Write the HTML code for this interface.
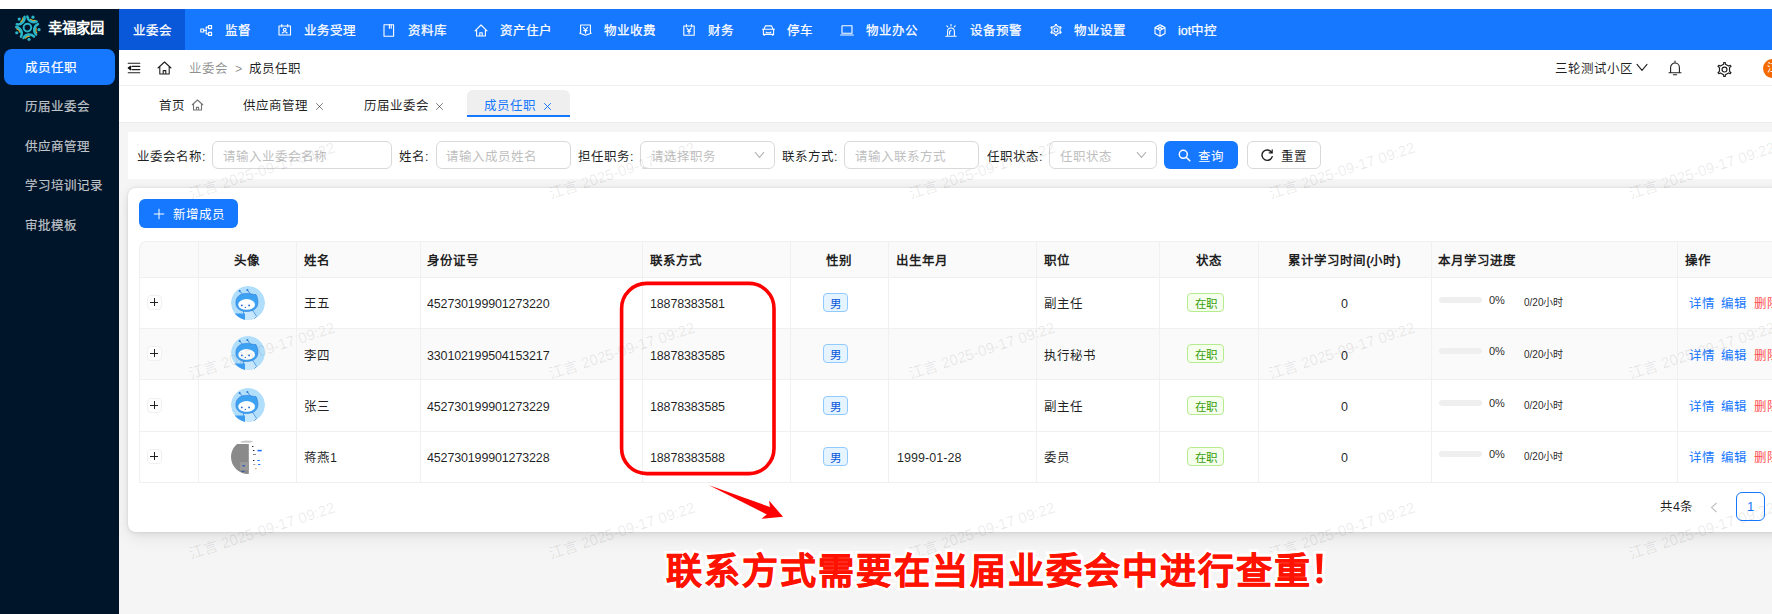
<!DOCTYPE html>
<html lang="zh-CN">
<head>
<meta charset="utf-8">
<style>
*{box-sizing:border-box;margin:0;padding:0}
html,body{width:1772px;height:614px;overflow:hidden;background:#fff}
body{position:relative;font-family:"Liberation Sans",sans-serif;font-size:13px;color:rgba(0,0,0,0.88)}
.a{position:absolute;white-space:nowrap}
#side{left:0;top:9px;width:119px;height:605px;background:#001529}
#top{left:119px;top:9px;width:1653px;height:41px;background:#1677ff}
#hdr{left:119px;top:50px;width:1653px;height:36px;background:#fff;border-bottom:1px solid #f0f0f0}
#tabs{left:119px;top:86px;width:1653px;height:37px;background:#fff;border-bottom:1px solid #ececec}
#content{left:119px;top:123px;width:1653px;height:491px;background:#f5f5f5}
.navt{color:#fff;font-size:12.5px;line-height:18px;-webkit-text-stroke:0.25px #fff}
.side-it{left:25px;color:rgba(255,255,255,0.7);font-size:12.5px;line-height:18px;-webkit-text-stroke:0.2px currentColor}
#filter{left:128px;top:132px;width:1644px;height:47px;background:#fff}
.lbl{font-size:12.5px;line-height:18px;color:rgba(0,0,0,0.88)}
.inp{height:28px;border:1px solid #d9d9d9;border-radius:6px;background:#fff}
.ph{color:#bfbfbf;font-size:12.5px;line-height:18px}
#card{left:128px;top:188px;width:1660px;height:344px;background:#fff;border-radius:8px;box-shadow:0 6px 16px rgba(0,0,0,0.08),0 1px 6px rgba(0,0,0,0.07),0 0 3px rgba(0,0,0,0.07)}
.th{font-weight:bold;font-size:12.5px;line-height:18px;color:rgba(0,0,0,0.88)}
.td{font-size:12.5px;line-height:18px;color:rgba(0,0,0,0.88)}
.num{letter-spacing:-0.15px}
.vl{width:1px;background:#f0f0f0}
.hl{height:1px;background:#f0f0f0}
.wm{color:rgba(0,0,0,0.09);font-size:15px;line-height:18px;transform:rotate(-18deg);transform-origin:0 100%}
.exp{width:15px;height:15px;border:1px solid #f0f0f0;border-radius:4px;background:#fff}
.exp:before{content:"";position:absolute;left:2px;top:6px;width:8px;height:1px;background:#222}
.exp:after{content:"";position:absolute;left:6px;top:2px;width:1px;height:8px;background:#222}
.av{width:34px;height:34px;border-radius:50%;background:#b5dcf9;overflow:hidden}
.av4{width:34px;height:34px;border-radius:50%;background:#fff;overflow:hidden}
.tagb{width:25px;height:19px;border:1px solid #91caff;background:#e6f4ff;color:#0958d9;border-radius:4px;font-size:11.5px;line-height:17px;padding-top:1.5px;text-align:center}
.tagg{width:37px;height:19px;border:1px solid #b7eb8f;background:#f6ffed;color:#389e0d;border-radius:4px;font-size:11.5px;line-height:17px;padding-top:1.5px;text-align:center}
.bar{width:43px;height:6px;border-radius:3px;background:#efefef}
.pct{font-size:11px;line-height:14px;color:rgba(0,0,0,0.88)}
.hrs{font-size:10px;line-height:14px;color:rgba(0,0,0,0.88)}
.note{font-size:36px;line-height:46px;font-weight:900;letter-spacing:2px}
</style>
</head>
<body>
<svg width="0" height="0" style="position:absolute">
<defs>
<clipPath id="avc"><circle cx="17" cy="17" r="17"/></clipPath>
<symbol id="avatar" viewBox="0 0 34 34">
<g clip-path="url(#avc)">
<circle cx="17" cy="17" r="17" fill="#b0defb"/>
<path d="M12.5 25 L21.5 24 L25.5 30.5 L21 35 L12.5 35 Z" fill="#c6e7fc" stroke="#3a86e0" stroke-width="0.7"/>
<path d="M2.5 27.5 H14 V35 H2.5 Z" fill="#3b9bf0"/>
<path d="M4.9 16.8 C4.9 10.5 9.5 7.4 15.5 7.4 C19.5 7.4 22.5 8.8 25 8.6 C26.4 11.2 27 14 26.8 17 C26.6 22.5 22 25.4 15.8 25.4 C9 25.4 4.9 22.4 4.9 16.8 Z" fill="#3ea2f3" stroke="#2a78d8" stroke-width="0.6"/>
<ellipse cx="15.6" cy="18.4" rx="8.4" ry="5.3" fill="#fff"/>
<circle cx="10.8" cy="19.4" r="0.95" fill="#2a6ed2"/>
<circle cx="18.1" cy="19.4" r="0.95" fill="#2a6ed2"/>
<circle cx="14.3" cy="21.4" r="0.7" fill="#2a6ed2"/>
<path d="M8.6 5 L11 7.8 M16.4 4 L19.2 7.8" stroke="#2a78d8" stroke-width="0.8" fill="none"/>
<circle cx="8.6" cy="5" r="1" fill="#2a78d8"/>
<circle cx="16.4" cy="4" r="1" fill="#2a78d8"/>
</g>
</symbol>
<symbol id="avatar4" viewBox="0 0 34 34">
<g clip-path="url(#avc)">
<rect x="0" y="0" width="34" height="34" fill="#fff"/>
<ellipse cx="15" cy="1.6" rx="7" ry="1.2" fill="#c8c8c8"/>
<rect x="0" y="4" width="17.8" height="31" fill="#8a8a8a"/>
<rect x="9" y="22" width="9" height="8" fill="#9a9a9a"/>
<rect x="11.5" y="25.2" width="2.4" height="1.2" fill="#1d4fc4"/>
<rect x="10.5" y="30.8" width="3" height="1" fill="#2a4fb0"/>
<rect x="21" y="6" width="1.5" height="1" fill="#333"/>
<rect x="22" y="10" width="1.4" height="1" fill="#222"/>
<rect x="26.5" y="9.8" width="4.2" height="1.6" fill="#1e70ff"/>
<rect x="22" y="14" width="3" height="1" fill="#888"/>
<rect x="22" y="20" width="1.4" height="1" fill="#222"/>
<rect x="26.3" y="20" width="2.6" height="1" fill="#2a7bff"/>
<rect x="22" y="24" width="2.4" height="1" fill="#aaa"/>
<rect x="27" y="24" width="2.4" height="1" fill="#2a7bff"/>
<rect x="24" y="28.2" width="1.6" height="1" fill="#c9a070"/>
</g>
</symbol>
</defs></svg>
<div class="a" id="side"></div>
<div class="a" id="top"></div>
<div class="a" id="hdr"></div>
<div class="a" id="tabs"></div>
<div class="a" id="content"></div>

<!-- logo -->
<svg class="a" style="left:12px;top:12px" width="32" height="32" viewBox="0 0 32 32"><circle cx="15.4" cy="15.6" r="3.8" fill="none" stroke="#2ab5c8" stroke-width="2"/><path d="M11.02 5.98 A5.0 5.0 0 0 1 8.82 10.03" fill="none" stroke="#e8a91c" stroke-width="1.5" stroke-linecap="round"/><path d="M12.44 4.87 A6.5 6.5 0 0 1 4.78 12.27" fill="none" stroke="#2ab5c8" stroke-width="2.5" stroke-linecap="round"/><circle cx="7.20" cy="7.11" r="1.6" fill="#2ab5c8"/><path d="M23.20 8.46 A5.0 5.0 0 0 1 18.66 7.62" fill="none" stroke="#e8a91c" stroke-width="1.5" stroke-linecap="round"/><path d="M24.69 9.47 A6.5 6.5 0 0 1 15.29 4.47" fill="none" stroke="#2ab5c8" stroke-width="2.5" stroke-linecap="round"/><circle cx="20.94" cy="5.18" r="1.6" fill="#2ab5c8"/><path d="M24.60 20.81 A5.0 5.0 0 0 1 24.00 16.23" fill="none" stroke="#e8a91c" stroke-width="1.5" stroke-linecap="round"/><path d="M24.10 22.54 A6.5 6.5 0 0 1 25.95 12.05" fill="none" stroke="#2ab5c8" stroke-width="2.5" stroke-linecap="round"/><circle cx="27.02" cy="17.65" r="1.6" fill="#2ab5c8"/><path d="M13.29 25.96 A5.0 5.0 0 0 1 17.45 23.97" fill="none" stroke="#e8a91c" stroke-width="1.5" stroke-linecap="round"/><path d="M11.49 26.02 A6.5 6.5 0 0 1 22.03 24.54" fill="none" stroke="#2ab5c8" stroke-width="2.5" stroke-linecap="round"/><circle cx="17.04" cy="27.29" r="1.6" fill="#2ab5c8"/><path d="M4.89 16.79 A5.0 5.0 0 0 1 8.07 20.14" fill="none" stroke="#e8a91c" stroke-width="1.5" stroke-linecap="round"/><path d="M4.28 15.10 A6.5 6.5 0 0 1 8.95 24.67" fill="none" stroke="#2ab5c8" stroke-width="2.5" stroke-linecap="round"/><circle cx="4.79" cy="20.77" r="1.6" fill="#2ab5c8"/></svg>
<div class="a" style="left:48px;top:19px;color:#fff;font-weight:bold;font-size:14.3px;line-height:18px">幸福家园</div>

<!-- side menu -->
<div class="a" style="left:4px;top:49px;width:111px;height:36px;background:#1677ff;border-radius:8px"></div>
<div class="a side-it" style="top:59px;color:#fff">成员任职</div>
<div class="a side-it" style="top:98px">历届业委会</div>
<div class="a side-it" style="top:138px">供应商管理</div>
<div class="a side-it" style="top:177px">学习培训记录</div>
<div class="a side-it" style="top:217px">审批模板</div>

<!-- top nav -->
<div class="a" style="left:119px;top:9px;width:66px;height:41px;background:#0958d9"></div>
<div class="a navt" style="left:133px;top:22px">业委会</div>
<div class="a navt" style="left:225px;top:22px">监督</div>
<div class="a navt" style="left:304px;top:22px">业务受理</div>
<div class="a navt" style="left:408px;top:22px">资料库</div>
<div class="a navt" style="left:500px;top:22px">资产住户</div>
<div class="a navt" style="left:604px;top:22px">物业收费</div>
<div class="a navt" style="left:708px;top:22px">财务</div>
<div class="a navt" style="left:787px;top:22px">停车</div>
<div class="a navt" style="left:866px;top:22px">物业办公</div>
<div class="a navt" style="left:970px;top:22px">设备预警</div>
<div class="a navt" style="left:1074px;top:22px">物业设置</div>
<div class="a navt" style="left:1178px;top:22px">iot中控</div>

<!-- header breadcrumb -->
<div class="a td" style="left:189px;top:60px;color:rgba(0,0,0,0.45)">业委会</div>
<div class="a td" style="left:235px;top:60px;color:rgba(0,0,0,0.45)">&gt;</div>
<div class="a td" style="left:249px;top:60px">成员任职</div>
<div class="a td" style="left:1555px;top:60px">三轮测试小区</div>

<!-- tabs -->
<div class="a td" style="left:159px;top:97px">首页</div>
<div class="a td" style="left:243px;top:97px">供应商管理</div>
<div class="a td" style="left:364px;top:97px">历届业委会</div>
<div class="a" style="left:467px;top:90px;width:103px;height:27px;background:#efefef;border-radius:6px 6px 0 0;border-bottom:2px solid #1677ff"></div>
<div class="a td" style="left:484px;top:97px;color:#1677ff">成员任职</div>

<!-- filter -->
<div class="a" id="filter"></div>
<div class="a lbl" style="left:137px;top:148px">业委会名称:</div>
<div class="a inp" style="left:212px;top:141px;width:180px"></div>
<div class="a ph" style="left:223px;top:148px">请输入业委会名称</div>
<div class="a lbl" style="left:399px;top:148px">姓名:</div>
<div class="a inp" style="left:436px;top:141px;width:135px"></div>
<div class="a ph" style="left:446px;top:148px">请输入成员姓名</div>
<div class="a lbl" style="left:578px;top:148px">担任职务:</div>
<div class="a inp" style="left:640px;top:141px;width:135px"></div>
<div class="a ph" style="left:651px;top:148px">请选择职务</div>
<div class="a lbl" style="left:782px;top:148px">联系方式:</div>
<div class="a inp" style="left:844px;top:141px;width:135px"></div>
<div class="a ph" style="left:855px;top:148px">请输入联系方式</div>
<div class="a lbl" style="left:987px;top:148px">任职状态:</div>
<div class="a inp" style="left:1049px;top:141px;width:108px"></div>
<div class="a ph" style="left:1060px;top:148px">任职状态</div>
<div class="a" style="left:1164px;top:141px;width:74px;height:28px;background:#1677ff;border-radius:6px"></div>
<div class="a td" style="left:1198px;top:148px;color:#fff">查询</div>
<div class="a inp" style="left:1247px;top:141px;width:74px"></div>
<div class="a td" style="left:1281px;top:148px">重置</div>

<!-- card -->
<div class="a" id="card"></div>
<div class="a" style="left:139px;top:199px;width:99px;height:29px;background:#1677ff;border-radius:6px"></div>
<div class="a td" style="left:173px;top:206px;color:#fff">新增成员</div>

<!-- TABLE START -->
<div class="a" style="left:139px;top:241px;width:1640px;height:36px;background:#fafafa;border-radius:8px 0 0 0"></div>
<div class="a" style="left:139px;top:328px;width:1640px;height:51px;background:#fafafa"></div>
<div class="a" style="left:139px;top:241px;width:1640px;height:242px;border-left:1px solid #f0f0f0;border-top:1px solid #f0f0f0;border-radius:8px 0 0 0"></div>
<div class="a hl" style="left:139px;top:277px;width:1640px"></div>
<div class="a hl" style="left:139px;top:328px;width:1640px"></div>
<div class="a hl" style="left:139px;top:379px;width:1640px"></div>
<div class="a hl" style="left:139px;top:431px;width:1640px"></div>
<div class="a hl" style="left:139px;top:482px;width:1640px"></div>
<div class="a vl" style="left:198px;top:241px;height:242px"></div>
<div class="a vl" style="left:296px;top:241px;height:242px"></div>
<div class="a vl" style="left:420px;top:241px;height:242px"></div>
<div class="a vl" style="left:642px;top:241px;height:242px"></div>
<div class="a vl" style="left:790px;top:241px;height:242px"></div>
<div class="a vl" style="left:888px;top:241px;height:242px"></div>
<div class="a vl" style="left:1036px;top:241px;height:242px"></div>
<div class="a vl" style="left:1159px;top:241px;height:242px"></div>
<div class="a vl" style="left:1258px;top:241px;height:242px"></div>
<div class="a vl" style="left:1431px;top:241px;height:242px"></div>
<div class="a vl" style="left:1677px;top:241px;height:242px"></div>
<div class="a th" style="left:198px;top:252px;width:98px;text-align:center">头像</div>
<div class="a th" style="left:304px;top:252px">姓名</div>
<div class="a th" style="left:427px;top:252px">身份证号</div>
<div class="a th" style="left:650px;top:252px">联系方式</div>
<div class="a th" style="left:790px;top:252px;width:98px;text-align:center">性别</div>
<div class="a th" style="left:896px;top:252px">出生年月</div>
<div class="a th" style="left:1044px;top:252px">职位</div>
<div class="a th" style="left:1159px;top:252px;width:99px;text-align:center">状态</div>
<div class="a th" style="left:1258px;top:252px;width:173px;text-align:center">累计学习时间(小时)</div>
<div class="a th" style="left:1438px;top:252px">本月学习进度</div>
<div class="a th" style="left:1685px;top:252px">操作</div>
<div class="a exp" style="left:147px;top:295px"></div>
<svg class="a" style="left:231px;top:286px" width="34" height="34"><use href="#avatar"/></svg>
<div class="a td" style="left:304px;top:295px">王五</div>
<div class="a td num" style="left:427px;top:295px">452730199901273220</div>
<div class="a td num" style="left:650px;top:295px">18878383581</div>
<div class="a tagb" style="left:823px;top:293px">男</div>
<div class="a td" style="left:1044px;top:295px">副主任</div>
<div class="a tagg" style="left:1187px;top:293px">在职</div>
<div class="a td" style="left:1258px;top:295px;width:173px;text-align:center">0</div>
<div class="a bar" style="left:1439px;top:297px"></div>
<div class="a pct" style="left:1489px;top:293px">0%</div>
<div class="a hrs" style="left:1524px;top:296px">0/20小时</div>
<div class="a td" style="left:1689px;top:295px;color:#1677ff">详情</div>
<div class="a td" style="left:1721px;top:295px;color:#1677ff">编辑</div>
<div class="a td" style="left:1754px;top:295px;color:#ff4d4f">删除</div>
<div class="a exp" style="left:147px;top:346px"></div>
<svg class="a" style="left:231px;top:336px" width="34" height="34"><use href="#avatar"/></svg>
<div class="a td" style="left:304px;top:347px">李四</div>
<div class="a td num" style="left:427px;top:347px">330102199504153217</div>
<div class="a td num" style="left:650px;top:347px">18878383585</div>
<div class="a tagb" style="left:823px;top:344px">男</div>
<div class="a td" style="left:1044px;top:347px">执行秘书</div>
<div class="a tagg" style="left:1187px;top:344px">在职</div>
<div class="a td" style="left:1258px;top:347px;width:173px;text-align:center">0</div>
<div class="a bar" style="left:1439px;top:348px"></div>
<div class="a pct" style="left:1489px;top:344px">0%</div>
<div class="a hrs" style="left:1524px;top:348px">0/20小时</div>
<div class="a td" style="left:1689px;top:347px;color:#1677ff">详情</div>
<div class="a td" style="left:1721px;top:347px;color:#1677ff">编辑</div>
<div class="a td" style="left:1754px;top:347px;color:#ff4d4f">删除</div>
<div class="a exp" style="left:147px;top:398px"></div>
<svg class="a" style="left:231px;top:388px" width="34" height="34"><use href="#avatar"/></svg>
<div class="a td" style="left:304px;top:398px">张三</div>
<div class="a td num" style="left:427px;top:398px">452730199901273229</div>
<div class="a td num" style="left:650px;top:398px">18878383585</div>
<div class="a tagb" style="left:823px;top:396px">男</div>
<div class="a td" style="left:1044px;top:398px">副主任</div>
<div class="a tagg" style="left:1187px;top:396px">在职</div>
<div class="a td" style="left:1258px;top:398px;width:173px;text-align:center">0</div>
<div class="a bar" style="left:1439px;top:400px"></div>
<div class="a pct" style="left:1489px;top:396px">0%</div>
<div class="a hrs" style="left:1524px;top:399px">0/20小时</div>
<div class="a td" style="left:1689px;top:398px;color:#1677ff">详情</div>
<div class="a td" style="left:1721px;top:398px;color:#1677ff">编辑</div>
<div class="a td" style="left:1754px;top:398px;color:#ff4d4f">删除</div>
<div class="a exp" style="left:147px;top:449px"></div>
<svg class="a" style="left:231px;top:440px" width="34" height="34"><use href="#avatar4"/></svg>
<div class="a td" style="left:304px;top:449px">蒋燕1</div>
<div class="a td num" style="left:427px;top:449px">452730199901273228</div>
<div class="a td num" style="left:650px;top:449px">18878383588</div>
<div class="a tagb" style="left:823px;top:447px">男</div>
<div class="a td" style="left:897px;top:449px;letter-spacing:0.05px">1999-01-28</div>
<div class="a td" style="left:1044px;top:449px">委员</div>
<div class="a tagg" style="left:1187px;top:447px">在职</div>
<div class="a td" style="left:1258px;top:449px;width:173px;text-align:center">0</div>
<div class="a bar" style="left:1439px;top:451px"></div>
<div class="a pct" style="left:1489px;top:447px">0%</div>
<div class="a hrs" style="left:1524px;top:450px">0/20小时</div>
<div class="a td" style="left:1689px;top:449px;color:#1677ff">详情</div>
<div class="a td" style="left:1721px;top:449px;color:#1677ff">编辑</div>
<div class="a td" style="left:1754px;top:449px;color:#ff4d4f">删除</div>
<!-- TABLE END -->
<!-- nav icons -->
<svg class="a" style="left:200px;top:25px" width="13" height="11" viewBox="0 0 13 11"><g fill="none" stroke="#fff" stroke-width="1.1" stroke-linejoin="round" stroke-linecap="round"><rect x="0.8" y="4" width="3" height="3"/><rect x="8.6" y="0.6" width="3" height="3"/><rect x="8.6" y="7.4" width="3" height="3"/><path d="M3.8 5.5 H6.2 M6.2 2.1 V8.9 M6.2 2.1 H8.6 M6.2 8.9 H8.6"/></g></svg>
<svg class="a" style="left:278px;top:24px" width="14" height="12" viewBox="0 0 14 12"><g fill="none" stroke="#fff" stroke-width="1.1" stroke-linejoin="round" stroke-linecap="round"><rect x="1" y="2" width="11.5" height="9"/><path d="M3.8 0.6 V3 M9.7 0.6 V3"/><circle cx="6.75" cy="5.6" r="1.4"/><path d="M4.4 9 Q6.75 6.6 9.1 9"/></g></svg>
<svg class="a" style="left:383px;top:24px" width="12" height="13" viewBox="0 0 12 13"><g fill="none" stroke="#fff" stroke-width="1.1" stroke-linejoin="round" stroke-linecap="round"><rect x="1" y="0.8" width="9.6" height="11.4"/><path d="M6.4 0.8 V4.2 M8.2 0.8 V4.2"/></g></svg>
<svg class="a" style="left:474px;top:24px" width="14" height="13" viewBox="0 0 14 13"><g fill="none" stroke="#fff" stroke-width="1.1" stroke-linejoin="round" stroke-linecap="round"><path d="M1 6.8 L7 1 L13 6.8 M2.6 5.3 V12 H11.4 V5.3 M5.8 12 V8.8 H8.2 V12"/></g></svg>
<svg class="a" style="left:579px;top:24px" width="13" height="12" viewBox="0 0 13 12"><g fill="none" stroke="#fff" stroke-width="1.1" stroke-linejoin="round" stroke-linecap="round"><path d="M1.6 1 H11.4 V8.6 L12.2 9.2 L6.5 11.2 L0.8 9.2 L1.6 8.6 Z"/><path d="M4.5 3.6 L6.5 6 L8.5 3.6 M6.5 6 V9 M4.8 6.6 H8.2"/></g></svg>
<svg class="a" style="left:683px;top:24px" width="12" height="12" viewBox="0 0 12 12"><g fill="none" stroke="#fff" stroke-width="1.1" stroke-linejoin="round" stroke-linecap="round"><rect x="0.8" y="2" width="10.4" height="9.2"/><path d="M3.4 0.6 V2.8 M8.6 0.6 V2.8 M4 4.4 L6 6.6 L8 4.4 M6 6.6 V9.6 M4.4 7.3 H7.6"/></g></svg>
<svg class="a" style="left:762px;top:25px" width="13" height="11" viewBox="0 0 13 11"><g fill="none" stroke="#fff" stroke-width="1.1" stroke-linejoin="round" stroke-linecap="round"><path d="M3.4 0.9 H9.6 L11 4.2 H2 Z M1.4 4.2 H11.6 V9.4 H1.4 Z M0.4 4.2 H1.4 M11.6 4.2 H12.6 M2.2 9.4 V10.6 M10.8 9.4 V10.6 M4.2 7.2 L5 7.8 H8 L8.8 7.2"/></g></svg>
<svg class="a" style="left:840px;top:25px" width="14" height="11" viewBox="0 0 14 11"><g fill="none" stroke="#fff" stroke-width="1.1" stroke-linejoin="round" stroke-linecap="round"><rect x="2" y="0.8" width="10" height="7.4"/><path d="M0.6 10 H13.4"/></g></svg>
<svg class="a" style="left:945px;top:24px" width="12" height="13" viewBox="0 0 12 13"><g fill="none" stroke="#fff" stroke-width="1.1" stroke-linejoin="round" stroke-linecap="round"><path d="M2.6 11.2 V7.4 A3.4 3.4 0 0 1 9.4 7.4 V11.2 M0.8 12.3 H11.2 M6 0.5 V2 M1.8 1.8 L2.8 2.8 M10.2 1.8 L9.2 2.8 M4.6 10.2 V8 A1.4 1.4 0 0 1 6 6.6"/></g></svg>
<svg class="a" style="left:1050px;top:24px" width="12" height="12" viewBox="0 0 12 12"><g fill="none" stroke="#fff" stroke-width="1.1" stroke-linejoin="round" stroke-linecap="round"><path d="M5.28 1.76 L5.41 0.43 L6.59 0.43 L6.72 1.76 L9.31 3.26 L10.53 2.71 L11.12 3.72 L10.03 4.50 L10.03 7.50 L11.12 8.28 L10.53 9.29 L9.31 8.74 L6.72 10.24 L6.59 11.57 L5.41 11.57 L5.28 10.24 L2.69 8.74 L1.47 9.29 L0.88 8.28 L1.97 7.50 L1.97 4.50 L0.88 3.72 L1.47 2.71 L2.69 3.26 Z"/><circle cx="6" cy="6" r="2"/></g></svg>
<svg class="a" style="left:1154px;top:24px" width="12" height="13" viewBox="0 0 12 13"><g fill="none" stroke="#fff" stroke-width="1.1" stroke-linejoin="round" stroke-linecap="round"><path d="M6 0.8 L11 3.6 V9.4 L6 12.2 L1 9.4 V3.6 Z M1 3.6 L6 6.4 L11 3.6 M6 6.4 V12.2 M3.5 2.2 L8.5 5 M8.5 2.2 L3.5 5"/></g></svg>

<!-- header icons -->
<svg class="a" style="left:127px;top:62px" width="14" height="12" viewBox="0 0 14 12"><g fill="none" stroke="rgba(0,0,0,0.88)" stroke-width="1.1" stroke-linejoin="round" stroke-linecap="round"><path d="M1.2 1.2 H12.8 M5 4.4 H12.8 M5 7.6 H12.8 M1.2 10.8 H12.8"/><path d="M3.6 4.2 L1.2 6 L3.6 7.8 Z" fill="rgba(0,0,0,0.88)"/></g></svg>
<svg class="a" style="left:157px;top:61px" width="15" height="14" viewBox="0 0 15 14"><g fill="none" stroke="rgba(0,0,0,0.88)" stroke-width="1.1" stroke-linejoin="round" stroke-linecap="round" stroke-width="1.3"><path d="M1 7 L7.5 1 L14 7 M2.8 5.4 V13 H12.2 V5.4 M6.2 13 V9.6 H8.8 V13"/></g></svg>
<svg class="a" style="left:1636px;top:63px" width="12" height="9" viewBox="0 0 12 9"><path d="M1 1.4 L6 7.4 L11 1.4" fill="none" stroke="rgba(0,0,0,0.88)" stroke-width="1.1" stroke-linejoin="round" stroke-linecap="round" stroke-width="1.3"/></svg>
<svg class="a" style="left:1668px;top:60px" width="14" height="16" viewBox="0 0 14 16"><g fill="none" stroke="rgba(0,0,0,0.88)" stroke-width="1.1" stroke-linejoin="round" stroke-linecap="round" stroke-width="1.3"><path d="M7 1 V2.4 M2.6 12.4 V7.4 A4.4 4.4 0 0 1 11.4 7.4 V12.4 M1 12.8 H13 M5.4 14.8 H8.6"/></g></svg>
<svg class="a" style="left:1717px;top:62px" width="15" height="15" viewBox="0 0 14 14"><g fill="none" stroke="rgba(0,0,0,0.88)" stroke-width="1.1" stroke-linejoin="round" stroke-linecap="round" stroke-width="1.25"><path d="M6.17 2.07 L6.31 0.44 L7.69 0.44 L7.83 2.07 L10.85 3.81 L12.34 3.12 L13.03 4.32 L11.69 5.26 L11.69 8.74 L13.03 9.68 L12.34 10.88 L10.85 10.19 L7.83 11.93 L7.69 13.56 L6.31 13.56 L6.17 11.93 L3.15 10.19 L1.66 10.88 L0.97 9.68 L2.31 8.74 L2.31 5.26 L0.97 4.32 L1.66 3.12 L3.15 3.81 Z"/><circle cx="7" cy="7" r="2.3"/></g></svg>
<div class="a" style="left:1763px;top:59px;width:19px;height:19px;border-radius:50%;background:#f56a00;color:#fff;font-size:11px;line-height:19px;text-align:center;overflow:hidden">江</div>

<!-- tab icons -->
<svg class="a" style="left:191px;top:99px" width="13" height="12" viewBox="0 0 13 12"><g fill="none" stroke="rgba(0,0,0,0.55)" stroke-width="1.1" stroke-linejoin="round"><path d="M1 6 L6.5 1 L12 6 M2.5 4.8 V11 H10.5 V4.8 M5.4 11 V8.4 H7.6 V11"/></g></svg>
<svg class="a" style="left:315px;top:102px" width="9" height="9" viewBox="0 0 9 9"><path d="M1.2 1.2 L7.8 7.8 M7.8 1.2 L1.2 7.8" stroke="rgba(0,0,0,0.5)" stroke-width="1"/></svg>
<svg class="a" style="left:435px;top:102px" width="9" height="9" viewBox="0 0 9 9"><path d="M1.2 1.2 L7.8 7.8 M7.8 1.2 L1.2 7.8" stroke="rgba(0,0,0,0.5)" stroke-width="1"/></svg>
<svg class="a" style="left:543px;top:102px" width="9" height="9" viewBox="0 0 9 9"><path d="M1.2 1.2 L7.8 7.8 M7.8 1.2 L1.2 7.8" stroke="#1677ff" stroke-width="1"/></svg>

<!-- filter icons -->
<svg class="a" style="left:754px;top:151px" width="11" height="8" viewBox="0 0 11 8"><path d="M1 1.2 L5.5 6.4 L10 1.2" fill="none" stroke="rgba(0,0,0,0.3)" stroke-width="1.1"/></svg>
<svg class="a" style="left:1136px;top:151px" width="11" height="8" viewBox="0 0 11 8"><path d="M1 1.2 L5.5 6.4 L10 1.2" fill="none" stroke="rgba(0,0,0,0.3)" stroke-width="1.1"/></svg>
<svg class="a" style="left:1178px;top:149px" width="13" height="13" viewBox="0 0 13 13"><g fill="none" stroke="#fff" stroke-width="1.5" stroke-linecap="round"><circle cx="5.3" cy="5.3" r="4"/><path d="M8.2 8.2 L11.8 11.8"/></g></svg>
<svg class="a" style="left:1260px;top:149px" width="14" height="13" viewBox="0 0 14 13"><g fill="none" stroke="rgba(0,0,0,0.88)" stroke-width="1.4" stroke-linecap="round"><path d="M11.6 3.4 A5.2 5.2 0 1 0 12.2 7.6"/><path d="M12.2 0.8 V3.8 H9.2" stroke-width="1.2"/></g></svg>
<svg class="a" style="left:153px;top:208px" width="12" height="12" viewBox="0 0 12 12"><path d="M6 0.8 V11.2 M0.8 6 H11.2" stroke="#fff" stroke-width="1"/></svg>

<svg class="a" style="left:0;top:0" width="1772" height="614">
<g stroke="#fff" stroke-width="6" stroke-linejoin="round" fill="#fff"><path d="M1316.2 553.8 H1322.6 L1321.6 574 H1317.2 Z"/><circle cx="1319.4" cy="580.3" r="3.1"/></g>
<g fill="#ff1200"><path d="M1316.2 553.8 H1322.6 L1321.6 574 H1317.2 Z"/><circle cx="1319.4" cy="580.3" r="3.1"/></g>
</svg>
<!-- pagination -->
<div class="a td" style="left:1660px;top:498px">共4条</div>
<svg class="a" style="left:1709px;top:502px" width="10" height="11" viewBox="0 0 10 11"><path d="M7.5 1 L2.5 5.5 L7.5 10" fill="none" stroke="rgba(0,0,0,0.25)" stroke-width="1.1"/></svg>
<div class="a" style="left:1736px;top:492px;width:29px;height:29px;border:1px solid #1677ff;border-radius:6px;color:#1677ff;font-size:13px;line-height:27px;text-align:center">1</div>

<div class="a" style="left:119px;top:122px;width:1653px;height:492px;overflow:hidden;pointer-events:none">
<div class="a wm" style="left:73px;top:63px">江言 2025-09-17 09:22</div>
<div class="a wm" style="left:433px;top:63px">江言 2025-09-17 09:22</div>
<div class="a wm" style="left:793px;top:63px">江言 2025-09-17 09:22</div>
<div class="a wm" style="left:1153px;top:63px">江言 2025-09-17 09:22</div>
<div class="a wm" style="left:1513px;top:63px">江言 2025-09-17 09:22</div>
<div class="a wm" style="left:73px;top:243px">江言 2025-09-17 09:22</div>
<div class="a wm" style="left:433px;top:243px">江言 2025-09-17 09:22</div>
<div class="a wm" style="left:793px;top:243px">江言 2025-09-17 09:22</div>
<div class="a wm" style="left:1153px;top:243px">江言 2025-09-17 09:22</div>
<div class="a wm" style="left:1513px;top:243px">江言 2025-09-17 09:22</div>
<div class="a wm" style="left:73px;top:423px">江言 2025-09-17 09:22</div>
<div class="a wm" style="left:433px;top:423px">江言 2025-09-17 09:22</div>
<div class="a wm" style="left:793px;top:423px">江言 2025-09-17 09:22</div>
<div class="a wm" style="left:1153px;top:423px">江言 2025-09-17 09:22</div>
<div class="a wm" style="left:1513px;top:423px">江言 2025-09-17 09:22</div>
</div>
<!-- annotation -->
<svg class="a" style="left:0;top:0" width="1772" height="614"><rect x="621.6" y="283.4" width="152.4" height="190.2" rx="25" ry="25" fill="none" stroke="#ff0000" stroke-width="3.6"/></svg>
<svg class="a" style="left:0;top:0" width="1772" height="614" viewBox="0 0 1772 614">
  <path d="M709 485.3 L770 507 L769 500.5 L783 516.7 L761.4 518.7 L766.8 514.4 Z" fill="#ff0000"/>
</svg>
<div class="a note" style="left:666px;top:548.5px;-webkit-text-stroke:6px #fff;color:#fff">联系方式需要在当届业委会中进行查重</div>
<div class="a note" style="left:666px;top:548.5px;-webkit-text-stroke:0.6px #ff1200;color:#ff1200">联系方式需要在当届业委会中进行查重</div>

</body>
</html>
